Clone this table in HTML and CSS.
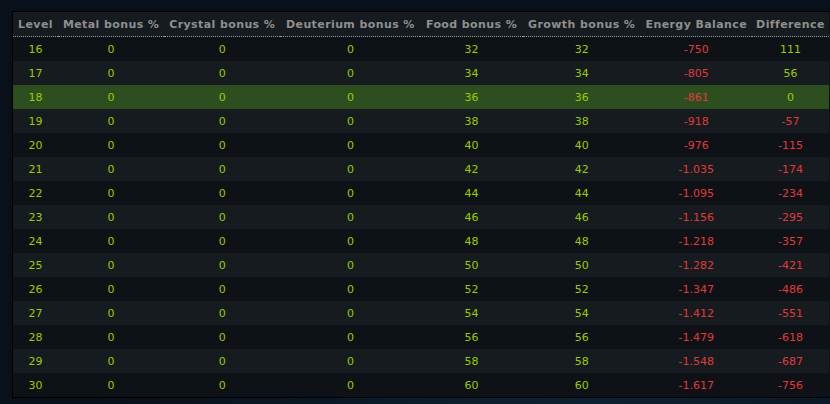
FILE: index.html
```html
<!DOCTYPE html>
<html lang="en">
<head>
    <meta charset="UTF-8">
    <title>Solar Plant Levels</title>
    <link rel="stylesheet" href="styles.css">
</head>
<body>
    <div class="panel">
        <table class="levels">
            <colgroup>
                <col style="width: 45px">
                <col style="width: 106px">
                <col style="width: 116px">
                <col style="width: 140px">
                <col style="width: 102px">
                <col style="width: 118px">
                <col style="width: 111px">
                <col style="width: 77px">
            </colgroup>
            <thead>
                <tr>
                    <th>Level</th>
                    <th>Metal bonus %</th>
                    <th>Crystal bonus %</th>
                    <th>Deuterium bonus %</th>
                    <th>Food bonus %</th>
                    <th>Growth bonus %</th>
                    <th>Energy Balance</th>
                    <th>Difference</th>
                </tr>
            </thead>
            <tbody id="rows"></tbody>
        </table>
    </div>

    <script>
        const data = [
            [16, 32, "-750", "111"],
            [17, 34, "-805", "56"],
            [18, 36, "-861", "0"],
            [19, 38, "-918", "-57"],
            [20, 40, "-976", "-115"],
            [21, 42, "-1.035", "-174"],
            [22, 44, "-1.095", "-234"],
            [23, 46, "-1.156", "-295"],
            [24, 48, "-1.218", "-357"],
            [25, 50, "-1.282", "-421"],
            [26, 52, "-1.347", "-486"],
            [27, 54, "-1.412", "-551"],
            [28, 56, "-1.479", "-618"],
            [29, 58, "-1.548", "-687"],
            [30, 60, "-1.617", "-756"]
        ];
        const body = document.getElementById("rows");
        data.forEach(([level, bonus, energy, diff]) => {
            const tr = document.createElement("tr");
            if (level === 18) tr.className = "current";
            const diffClass = diff.startsWith("-") ? "neg" : "";
            tr.innerHTML = `
                <td>${level}</td>
                <td>0</td>
                <td>0</td>
                <td>0</td>
                <td>${bonus}</td>
                <td>${bonus}</td>
                <td class="neg">${energy}</td>
                <td class="${diffClass}">${diff}</td>
            `;
            body.appendChild(tr);
        });
    </script>
</body>
</html>
```

FILE: styles.css
```css
body {
    margin: 0;
    background-color: #08111a;
    background-image: radial-gradient(ellipse at 70% 100%, #0f2233 0%, #08111a 60%);
    font-family: 'DejaVu Sans', Verdana, sans-serif;
    font-size: 11px;
    height: 404px;
    overflow: hidden;
}

.panel {
    margin: 11px 0 0 12px;
    width: 817px;
    border: 1px solid #000;
    border-right: 1px solid #03060a;
    background-color: #0e1115;
}

.levels {
    width: 816px;
    border-collapse: collapse;
    table-layout: fixed;
}

.levels th {
    height: 24px;
    padding: 0;
    background-color: #161b1f;
    color: #8f8f8f;
    font-weight: bold;
    letter-spacing: 0.4px;
    text-align: center;
    white-space: nowrap;
    border-bottom: 1px dotted #9a9a9a;
}

.levels td {
    height: 24px;
    padding: 0;
    text-align: center;
    color: #99cc00;
}

.levels tbody tr:nth-child(odd) {
    background-color: #0e1115;
}

.levels tbody tr:nth-child(even) {
    background-color: #161b1f;
}

.levels tbody tr.current {
    background-color: #2d4f20;
}

.levels td.neg {
    color: #e03a3a;
}
```
